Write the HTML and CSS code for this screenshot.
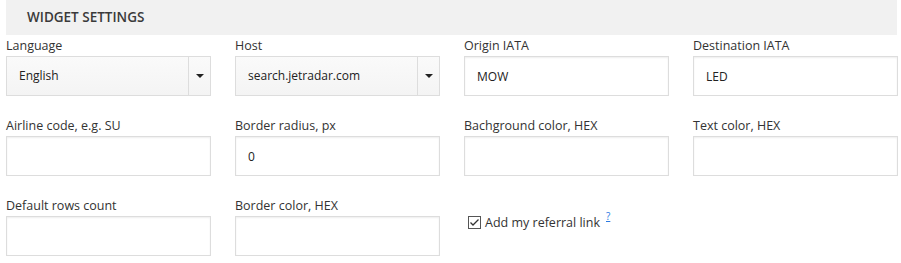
FILE: index.html
```
<!DOCTYPE html>
<html lang="en">
<head>
  <meta charset="UTF-8">
  <title>Widget settings</title>
  <link rel="stylesheet" href="styles.css">
</head>
<body>
  <div class="panel">
    <div class="panel-heading">Widget settings</div>
    <form class="settings-grid">
      <div class="field">
        <label for="language">Language</label>
        <div class="select-box">
          <span class="select-value">English</span>
          <span class="select-arrow"><span class="caret"></span></span>
        </div>
      </div>
      <div class="field">
        <label for="host">Host</label>
        <div class="select-box">
          <span class="select-value">search.jetradar.com</span>
          <span class="select-arrow"><span class="caret"></span></span>
        </div>
      </div>
      <div class="field">
        <label for="origin">Origin IATA</label>
        <input type="text" id="origin" value="MOW">
      </div>
      <div class="field">
        <label for="destination">Destination IATA</label>
        <input type="text" id="destination" value="LED">
      </div>

      <div class="field">
        <label for="airline">Airline code, e.g. SU</label>
        <input type="text" id="airline">
      </div>
      <div class="field">
        <label for="radius">Border radius, px</label>
        <input type="text" id="radius" value="0">
      </div>
      <div class="field">
        <label for="bgcolor">Bachground color, HEX</label>
        <input type="text" id="bgcolor">
      </div>
      <div class="field">
        <label for="textcolor">Text color, HEX</label>
        <input type="text" id="textcolor">
      </div>

      <div class="field">
        <label for="rows">Default rows count</label>
        <input type="text" id="rows">
      </div>
      <div class="field">
        <label for="bordercolor">Border color, HEX</label>
        <input type="text" id="bordercolor">
      </div>
      <div class="field field-check">
        <label class="check-label">
          <span class="checkbox">
            <svg width="11" height="11" viewBox="0 0 11 11"><path d="M1.5 5.5 L4 8 L9.5 2.5" fill="none" stroke="#333" stroke-width="1.3"/></svg>
          </span>
          <span>Add my referral link</span>
          <a href="#" class="help">?</a>
        </label>
      </div>
    </form>
  </div>
</body>
</html>
```

FILE: styles.css
```
body {
  margin: 0;
  font-family: "Open Sans", "Noto Sans", sans-serif;
  font-size: 12.5px;
  color: #333;
  background: #fff;
}
.panel {
  width: 891px;
  margin-left: 6px;
}
.panel-heading {
  height: 35px;
  line-height: 35px;
  padding-left: 21px;
  background-color: #f1f1f1;
  font-size: 13.5px;
  font-weight: 600;
  text-transform: uppercase;
  color: #3a3a3a;
}
.settings-grid {
  display: grid;
  grid-template-columns: repeat(4, 205px);
  column-gap: 24px;
  row-gap: 19px;
}
.field label {
  display: block;
  height: 21px;
  line-height: 22px;
  color: #333;
}
.field input[type="text"],
.select-box {
  box-sizing: border-box;
  width: 205px;
  height: 40px;
  margin: 0;
  padding: 0 12px;
  border: 1px solid #ddd;
  box-shadow: inset 0 1px 2px rgba(0, 0, 0, 0.07);
  font-family: inherit;
  font-size: 12px;
  color: #222;
  background: #fff;
  outline: none;
}
.select-box {
  display: flex;
  padding: 0;
  background: linear-gradient(#fafafa, #f4f4f4);
  box-shadow: none;
}
.select-value {
  flex: 1;
  padding-left: 12px;
  line-height: 38px;
  font-size: 12px;
  color: #222;
}
.select-arrow {
  width: 21px;
  border-left: 1px solid #ddd;
  display: flex;
  align-items: center;
  justify-content: center;
}
.caret {
  width: 0;
  height: 0;
  border-left: 4px solid transparent;
  border-right: 4px solid transparent;
  border-top: 4px solid #222;
}
.field-check {
  padding-top: 21px;
}
.field .check-label {
  display: flex;
  align-items: center;
  height: 13px;
  line-height: 13px;
  padding-left: 4px;
  font-size: 12.5px;
}
.checkbox {
  box-sizing: border-box;
  width: 13px;
  height: 13px;
  margin-right: 4px;
  border: 1px solid #555;
  background: #fff;
  display: flex;
  align-items: center;
  justify-content: center;
}
.help {
  align-self: flex-start;
  margin: -5px 0 0 6px;
  font-size: 10px;
  line-height: 10px;
  color: #2a7ae2;
}
```
